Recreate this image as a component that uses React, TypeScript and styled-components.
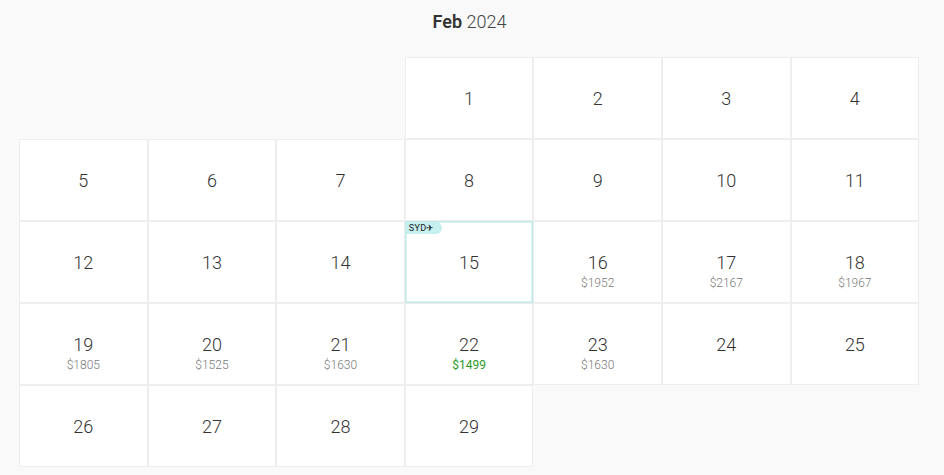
import React from "react";
import styled, { createGlobalStyle } from "styled-components";

const Global = createGlobalStyle`
  html, body { margin: 0; padding: 0; background: #f9f9f9; }
  body { font-family: Roboto, "Noto Sans", sans-serif; color: #333; }
`;

const Page = styled.div`
  width: 944px;
  height: 475px;
  box-sizing: border-box;
  padding: 9px 0 0 19px;
  overflow: hidden;
`;

const Title = styled.div`
  width: 901px;
  text-align: center;
  font-size: 18px;
  line-height: 26px;
  color: #333;
  margin-bottom: 22px;
  b { font-weight: 600; }
  span { font-weight: 300; color: #444; }
`;

const Grid = styled.div`
  display: grid;
  grid-template-columns: repeat(7, 128.6px);
  grid-auto-rows: 82px;
  width: 901px;
`;

const Empty = styled.div``;

const Cell = styled.div<{ $selected?: boolean }>`
  position: relative;
  background: #fff;
  border: 1px solid ${(p) => (p.$selected ? "#bfe9ea" : "#eeeeee")};
  box-shadow: ${(p) => (p.$selected ? "inset 0 0 0 1px #dcf4f4" : "none")};
  display: flex;
  flex-direction: column;
  align-items: center;
  padding-top: 29px;
  box-sizing: border-box;
`;

const Day = styled.div`
  font-size: 18px;
  line-height: 24px;
  color: #333;
  font-weight: 300;
`;

const Price = styled.div<{ $best?: boolean }>`
  font-size: 12px;
  line-height: 16px;
  margin-top: 0;
  font-weight: ${(p) => (p.$best ? 400 : 300)};
  color: ${(p) => (p.$best ? "#2b9a2b" : "#7a7a7a")};
`;

const Badge = styled.div`
  position: absolute;
  top: 0;
  left: 0;
  height: 12px;
  padding: 0 7px 0 3px;
  background: #c6efef;
  border-radius: 0 6px 6px 0;
  font-size: 9px;
  line-height: 12px;
  color: #222;
  letter-spacing: 0.3px;
`;

type D = { d: number; p?: number; best?: boolean; sel?: boolean };

const days: D[] = [
  { d: 1 }, { d: 2 }, { d: 3 }, { d: 4 },
  { d: 5 }, { d: 6 }, { d: 7 }, { d: 8 }, { d: 9 }, { d: 10 }, { d: 11 },
  { d: 12 }, { d: 13 }, { d: 14 }, { d: 15, sel: true }, { d: 16, p: 1952 }, { d: 17, p: 2167 }, { d: 18, p: 1967 },
  { d: 19, p: 1805 }, { d: 20, p: 1525 }, { d: 21, p: 1630 }, { d: 22, p: 1499, best: true }, { d: 23, p: 1630 }, { d: 24 }, { d: 25 },
  { d: 26 }, { d: 27 }, { d: 28 }, { d: 29 },
];

export default function App() {
  return (
    <Page>
      <Global />
      <Title>
        <b>Feb</b> <span>2024</span>
      </Title>
      <Grid>
        <Empty />
        <Empty />
        <Empty />
        {days.map((x) => (
          <Cell key={x.d} $selected={x.sel}>
            {x.sel && <Badge>SYD✈</Badge>}
            <Day>{x.d}</Day>
            {x.p && <Price $best={x.best}>${x.p}</Price>}
          </Cell>
        ))}
      </Grid>
    </Page>
  );
}
